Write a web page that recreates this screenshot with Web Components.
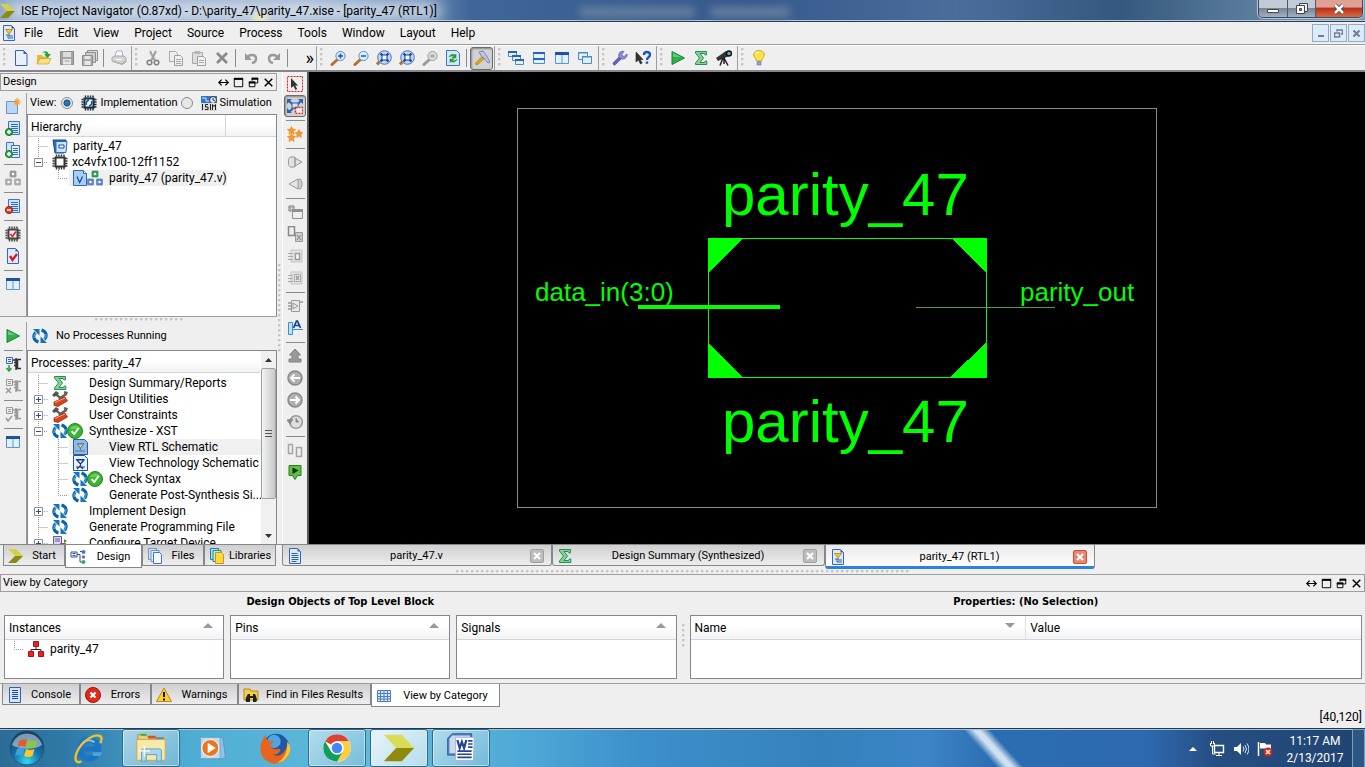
<!DOCTYPE html>
<html lang="en">
<head>
<meta charset="utf-8">
<title>ISE Project Navigator</title>
<style>
html,body{margin:0;height:100%}
body{font:12px/16px Roboto,"Liberation Sans",sans-serif;color:#000;background:#efefef;overflow:hidden;
--line:#9d9d9d;--frame:#828790;--small:11px;--face:#efefef}
</style>
</head>
<body>
<ise-window></ise-window>
<script>
const ARROWS='<path d="M6.500 14C1.500 12.500.500 8 3.500 4.500" fill="none" stroke="#0b62a8" stroke-width="3"/><path d="M1 1h6.500v6.500z" fill="#1474bd"/><path d="M9.500 2c5 1.500 6 6 3 9.500" fill="none" stroke="#0b62a8" stroke-width="3"/><path d="M15 15H8.500V8.500z" fill="#1474bd"/><path d="M2 10c0-2 .500-3.500 1.500-5M14 6c0 2-.500 3.500-1.500 5" stroke="#5cc0ea" fill="none"/>';
const DOC='<path d="M2.500.500h8l3 3v12h-11z" fill="#dcebfb" stroke="#3566b8"/><path d="M10.500.500v3h3z" fill="#2d5fb4"/>';
const MAG=(c,r,h,s)=>`<path d="M8 9 2 14.500" stroke="${h}" stroke-width="3" stroke-linecap="round"/><circle cx="10.500" cy="6" r="4.600" fill="${r}" stroke="${c}" stroke-width="1"/>${s}`;
const CHIP=(c,f)=>`<path d="M3.500 3.500h9v9h-9z" fill="${f}" stroke="${c}" stroke-width="2"/><path d="M4.500.500v2M7 .500v2M9.500.500v2M12 .500v2M4.500 13v2.500M7 13v2.500M9.500 13v2.500M12 13v2.500M.500 4.500h2M.500 7h2M.500 9.500h2M.500 12h2M13 4.500h2.500M13 7h2.500M13 9.500h2.500M13 12h2.500" stroke="${c}" stroke-width="1.400"/>`;
const LINES='<path d="M3.500 1.500h11v13h-11z" fill="#cfe3fa" stroke="#3b74c8"/><path d="M6 4.500h7M6 6.500h7M6 8.500h7M6 10.500h7M6 12.500h7" stroke="#2f6fc9"/>';
const SQ=(x,y,c)=>`<path d="M${x-.5} ${y-.5}h5v5h-5z" fill="${c}" fill-opacity=".35" stroke="${c}" stroke-width="1.500"/><path d="M${x-1.5} ${y+.8}h7M${x-1.5} ${y+3.2}h7M${x+.8} ${y-1.5}v7M${x+3.2} ${y-1.5}v7" stroke="${c}" stroke-width=".8"/><path d="M${x+1} ${y+1}h2v2h-2z" fill="#fff"/>`;
const TICK='<circle cx="8" cy="8" r="7.500" fill="#39b52e" stroke="#1c8718"/><path d="M3 6a5.500 5.500 0 0 1 10 0" fill="#8be07a" opacity=".6"/><path d="m4.500 8 2.700 3 4.500-6" fill="none" stroke="#fff" stroke-width="2"/>';
const SIGMA='<path d="M2.500 1.500h11v3.300h-1.700L11.300 3.500H7L10.500 8 7 12.500h4.500l.800-1.500h1.500v3.500H2.500V13L6.500 8 2.500 3z" fill="#8ccf9b" stroke="#1d9150"/>';
const CHEV='<path d="M0 1h8l7 7H7z" fill="#cfd24a"/><path d="M7 8h8l-7 7H0z" fill="#8a8a14"/>';
const WIN2='<path d="M1.500 2.500h13v11h-13z" fill="#e1f1fc" stroke="#5d96cf"/><path d="M1 2h14v3H1z" fill="#1d51a4"/><path d="M8 5v8" stroke="#5d96cf"/>';
const PROC=(c,x)=>`<path d="M1.500 1.500h6v6h-6z" fill="#eee" stroke="${c}"/><path d="M3 3.500h3M3 5.500h3" stroke="${c}"/><path d="M8 4h3M11 2v12M16 3.500h-3.500v9H16M9 6.500h3M9 9.500h3" stroke="${c==='#3a66b0'?'#333':c}" stroke-width="1.500" fill="none"/>${x}`;
const ICONS={
app:CHEV,
schem:DOC+'<path d="M4.500 4.500h7L8 9z" fill="#f5c431" stroke="#c8921a"/><path d="M5 10h2v3h5M8 9v2h4" fill="none" stroke="#2b62b8"/>',
rtl:'<path d="M1.500.500h11l3 3v12h-14z" fill="#8fb9e8" stroke="#2a5da8"/><path d="M5 4.500h7M5.500 5l3 4 3-4zM8.500 9v2.500M3 12h10" fill="#d8d6a0" stroke="#647a80"/>',
tech:'<path d="M1.500.500h11l3 3v12h-14z" fill="#eaf2fc" stroke="#1e50a8"/><path d="M4 4.500h8M5 5l3.500 4L12 5zM8.500 9v2M4 12h9M5 14l3-3 3 3" fill="none" stroke="#15398b" stroke-width="1.200"/>',
new:'<path d="M2.500.500h8l3.500 3.500v11.500H2.500z" fill="#e8f2fd" stroke="#2f62b0"/><path d="M10.500.500V4H14z" fill="#2b64c0"/>',
open:'<path d="M1 5h5l1 1.500h5.500V14H1z" fill="#e9b73a"/><path d="M1 14 4 8.500h11L12.500 14z" fill="#fbe08a" stroke="#c8921a" stroke-width=".6"/><path d="M6 3c3-3 6-1.500 6.500 1H15l-3.500 4L8 4h2C9.500 2.500 8 2 6 3z" fill="#23a23a"/>',
save:'<path d="M1.500 1.500h13v13h-13z" fill="#a3a3a3" stroke="#8c8c8c"/><path d="M4 2h8v5H4z" fill="#ddd"/><path d="M4 9h8v5.500H4z" fill="#e8e8e8"/><path d="M5.500 11h5" stroke="#999"/>',
saveall:'<path d="M5.500.500h10v10h-10z" fill="#ddd" stroke="#8c8c8c"/><path d="M3.500 2.500h10v10h-10z" fill="#ccc" stroke="#8c8c8c"/><path d="M.500 5.500h10v10H.500z" fill="#aaa" stroke="#8c8c8c"/><path d="M2.500 6h6v3h-6zM2.500 11h6v4h-6z" fill="#e6e6e6"/>',
print:'<path d="M4 6 5.500 1H11l1 5" fill="#fff" stroke="#9ab0d4"/><path d="M1 7.500 4 6h9l2 2v4l-4 2.500L1 11z" fill="#d4d4d4" stroke="#a8a8a8"/><path d="M2 11.500 11 14l3-3" fill="none" stroke="#aaa"/><path d="M5 9.500h6" stroke="#fff"/>',
cut:'<path d="M5 1l4.500 9M11 1 6.500 10" stroke="#a0a0a0" stroke-width="2"/><circle cx="4.500" cy="12.500" r="2.300" fill="none" stroke="#808080" stroke-width="1.500"/><circle cx="11.500" cy="12.500" r="2.300" fill="none" stroke="#808080" stroke-width="1.500"/>',
copy:'<path d="M1.500 1.500h6l2 2v8h-8z" fill="#eee" stroke="#aaa"/><path d="M6.500 5.500h6l2 2v8h-8z" fill="#eee" stroke="#a0a0a0"/><path d="M8 9.500h5M8 11.500h5M8 13.500h5" stroke="#aaa"/>',
paste:'<path d="M1.500 2.500h10v11h-10z" fill="#ddd" stroke="#aaa"/><path d="M4 1h5v3H4z" fill="#b5b5b5"/><path d="M6.500 6.500h6l2 2v7h-8z" fill="#f0f0f0" stroke="#a0a0a0"/><path d="M8 10.500h5M8 12.500h5" stroke="#aaa"/>',
del:'<path d="m3 3 10 10M13 3 3 13" stroke="#8a8a8a" stroke-width="2.800"/>',
undo:'<path d="M2 3v7h7z" fill="#999"/><path d="M4 8c2-4 9-4 9 .500 0 2.500-1.500 4-4 4.500" fill="none" stroke="#999" stroke-width="2.400"/>',
redo:'<path d="M14 3v7H7z" fill="#999"/><path d="M12 8C10 4 3 4 3 8.500c0 2.500 1.500 4 4 4.500" fill="none" stroke="#999" stroke-width="2.400"/>',
zin:MAG('#5b8fd0','#dcecff','#b9702c','<path d="M8 6h5M10.500 3.500v5" stroke="#1f56b0" stroke-width="1.500"/>'),
zout:MAG('#5b8fd0','#dcecff','#b9702c','<path d="M8 6h5" stroke="#1f56b0" stroke-width="1.500"/>'),
zfit:'<path d="M5 10 1 14.500" stroke="#b9702c" stroke-width="3"/><circle cx="8.500" cy="7.500" r="6.800" fill="#bcd6f7" stroke="#4a78bd"/><path d="m4.500 3.500 8 8M12.500 3.500l-8 8" stroke="#163f96" stroke-width="2"/><path d="M6 5h5v5H6z" fill="#fff" stroke="#163f96"/>',
zbox:MAG('#a0a0a0','#ddd','#999','<path d="M8.500 4.500h4v3h-4z" fill="#aaa"/>'),
refresh:'<path d="M1.500.500h10l3 3v12h-13z" fill="#d4e8fb" stroke="#3b78c4"/><path d="M4 7a4 4 0 0 1 6-2l1-1v4H7l1.500-1.500C7 5.800 5.500 6 4 7zM12 9a4 4 0 0 1-6 2.500l-1 1V9h4l-1.500 1.500C9 11 10.500 10.500 12 9z" fill="#2a9b35" stroke="#2a9b35" stroke-width=".6"/>',
hammer:'<path d="M1 13.500 9 6l2 2-8 7z" fill="#e8a51c" stroke="#a06a10" stroke-width=".6"/><path d="M5 2 9 1l3 4 4 7-2 1-4-5-2-1z" fill="#b9c7e8" stroke="#5868a0" stroke-width=".7"/>',
casc:'<path d="M.500 1.500h8v5h-8zM4.500 5.500h8v5h-8zM7.500 9.500h8v5h-8z" fill="#e1f1fc" stroke="#4c8bcc"/><path d="M0 1h9v2H0zM4 5h9v2H4zM7 9h9v2H7z" fill="#2a62b4"/>',
tileh:'<path d="M2.500 2.500h11v11h-11z" fill="#e1f1fc" stroke="#4c8bcc"/><path d="M2 2h12v2H2zM2 8h12v2H2z" fill="#2a62b4"/>',
tilev:WIN2,
dup:'<path d="M1.500 2.500h9v7h-9z" fill="#e1f1fc" stroke="#4c8bcc"/><path d="M5.500 6.500h9v7h-9z" fill="#e1f1fc" stroke="#4c8bcc"/><path d="M5 6h10v1.500H5zM1 2h10v1.500H1z" fill="#4c8bcc"/>',
wrench:'<path d="m2.500 13.500 6.500-6.500" stroke="#5f63b8" stroke-width="3.600" stroke-linecap="round"/><path d="M7.500 8C5.500 4 8 .500 12 1.500L9.800 4l.400 2 2 .400L15 4c.500 4-3.500 6.500-7.500 4z" fill="#8c90d8" stroke="#5559a8" stroke-width=".8"/>',
help:'<path d="M1 2v10l2.500-2L5.500 14l1.700-1-2-3.500H8z" fill="#333" stroke="#222" stroke-width=".6"/><path d="M9 5c0-4 6-4 6 0 0 2-3 2.500-3 5M12 11.500v2.200" fill="none" stroke="#1c56b8" stroke-width="2.400"/>',
play:'<path d="M2 1.500 14.500 8 2 14.500z" fill="#2fb04b" stroke="#168436"/><path d="m3 3 8 4H3z" fill="#8fdb93" opacity=".6"/>',
sigma:SIGMA,
scope:'<path d="m0 8 10-7 3 5-11 5z" fill="#333"/><circle cx="13" cy="3.500" r="2.500" fill="#49b7d8" stroke="#111" stroke-width="1.500"/><path d="m7 8-3 7.500M8 8l4 7.500M8 7v7" stroke="#222" stroke-width="1.500"/>',
bulb:'<path d="M8 .500c6 0 6.500 5.500 3.500 8L10.500 11h-5L4.500 8.500C1.500 6 2 .500 8 .500z" fill="#ffe24a" stroke="#d6a91c"/><path d="M5.500 3.500Q7 2 8 2.500" stroke="#fff" fill="none" stroke-width="1.500"/><path d="M6 11.500h4v3.500H6z" fill="#8aa5d8" stroke="#5a76b0" stroke-width=".6"/>',
newsrc:'<path d="M1.500 3.500h11v12h-11z" fill="#bcd6f5" stroke="#6a93cc"/><path d="M12 0v8M8 4h8M9.500 1.500l5 5M14.500 1.500l-5 5" stroke="#f3a32c" stroke-width="1.200"/>',
addsrc:LINES+'<circle cx="4" cy="12" r="3.600" fill="#35a84a" stroke="#1c7a2f"/><path d="M2 12h4M4 10v4" stroke="#fff" stroke-width="1.500"/>',
addcopy:'<path d="M1.500.500h7v10h-7z" fill="#cfe3fa" stroke="#3b74c8"/><path d="M6.500 3.500h8v12h-8z" fill="#e4effc" stroke="#3b74c8"/><path d="M8 6.500h5M8 8.500h5M8 10.500h5M8 12.500h5" stroke="#2f6fc9"/><circle cx="4" cy="12" r="3.600" fill="#35a84a" stroke="#1c7a2f"/><path d="M2 12h4M4 10v4" stroke="#fff" stroke-width="1.500"/>',
hier:SQ(6,2,'#999')+SQ(1.5,10,'#aaa')+SQ(10.5,10,'#aaa'),
rmsrc:LINES+'<circle cx="4" cy="12" r="3.600" fill="#e03a26" stroke="#a81c10"/><path d="M2 12h4" stroke="#fff" stroke-width="1.500"/>',
chipok:CHIP('#444','#eee')+'<path d="m5.500 8 2 2.500L11 5.500" fill="none" stroke="#e02020" stroke-width="1.600"/>',
docok:DOC+'<path d="m5 8 2.500 4L12 6" fill="none" stroke="#e01818" stroke-width="2.400"/>',
win2:WIN2,
run1:PROC('#3a66b0','<path d="M4 9v5M1.500 12 4 15l2.500-3" stroke="#28a03a" stroke-width="1.500" fill="none"/>'),
run2:PROC('#999','<path d="m1 10 5 5M6 10l-5 5" stroke="#999" stroke-width="1.500"/>'),
run3:PROC('#999','<path d="m1 12 2 3 4-5" stroke="#999" stroke-width="1.500" fill="none"/>'),
arrows:ARROWS,
chip:CHIP('#333','#fff'),
chipblue:CHIP('#1c2a3a','#fff')+'<path d="M8 5a3.500 3.500 0 0 0-2.500 5M8 11a3.500 3.500 0 0 0 2.500-5" fill="none" stroke="#0b62a8" stroke-width="1.800"/>',
isim:'<path d="M0 1h16v7H0z" fill="#2f78c8"/><path d="M1 3h4v3h4" stroke="#cfe6ff" fill="none"/><circle cx="12" cy="5" r="3.500" fill="#d6e6f6" stroke="#333"/><path d="M12 3v2l2 1" stroke="#333" fill="none"/><path d="M0 8h16v8H0z" fill="#dcdcdc"/><path d="M1.500 9v6M7 9.500H4.500v2.500H7v2.500H4M9.500 9v6M11.500 15V9.500l1.500 2 1.500-2V15" stroke="#222" fill="none"/>',
project:'<path d="M1 2h13l-2 13H3z" fill="#2a6dc0" stroke="#174a90"/><path d="M4 3.500h11l-1 11H4z" fill="#cfe4fa" stroke="#2a6dc0"/><path d="M7 7h5v3H7z" fill="#fff" stroke="#174a90"/>',
vfile:'<path d="M1.500.500h10l3 3v12h-13z" fill="#a9cdf5" stroke="#2c67b8"/><path d="M11.500.500v3h3" fill="#fff" stroke="#2c67b8"/><path d="m5 6.500 2.700 6 2.800-6" fill="none" stroke="#174a90" stroke-width="1.200"/>',
top:SQ(6,2,'#2f9a55')+SQ(1.5,10,'#5b80bb')+SQ(10.5,10,'#5b80bb'),
tools:'<path d="M0 4 4 0l3 2-1 2 6 3-2 2-6-4-2 1z" fill="#555"/><path d="m12 0 4 1-1 3-7 5-2-2 6-4z" fill="#6d625c"/><path d="M2 11 13 6l2.500 4L6 15.500l-4-1z" fill="#d9431c" stroke="#8f2408" stroke-width=".7"/><path d="m3 11.500 10-4.500" stroke="#f5a48a"/>',
tick:TICK,
config:'<path d="M1.500 1.500h8v12h-8z" fill="#dcd8f2" stroke="#5c5896"/><path d="M3 4h5M3 6h5" stroke="#5c5896"/><path d="M8 8h6v6H8z" fill="#c23a6a"/><path d="m12 4 3 2-3 2z" fill="#2a9b35"/>',
cursor:'<path d="M.500.500h15v15H.500z" fill="none" stroke="#f01818" stroke-dasharray="2 1"/><path d="M4 2v10l2.500-2L8.500 14l1.700-1-2-3.500H11z" fill="#333"/>',
pan:'<path d="m2 3 12 11M14 3 2 14" stroke="#2a62b4" stroke-width="2"/><path d="M0 1h5L0 6zM16 1h-5l5 5zM0 15h5L0 10z" fill="#2a62b4"/><path d="M5 5h6v5H5z" fill="#cfe3fa" stroke="#2a62b4"/><path d="M8.500 9.500h7v6h-7z" fill="#fff" stroke="#f01818" stroke-dasharray="2 1" stroke-width="1.500"/>',
stars:'<path d="m4.500.500 1.300 2.600 3 .400L6.500 5.500l.700 3-2.700-1.500L2 8.500l.500-3L.300 3.500l3-.400zM4.500 7.500l1.300 2.600 3 .400-2.300 2 .700 3-2.700-1.500L2 15.500l.500-3-2.200-2 3-.400zM12 3.500l1.300 2.600 2.700.400-2 2 .500 3L12 10l-2.500 1.500.500-3-2-2 2.700-.400z" fill="#f59a2c" stroke="#e07c18" stroke-width=".5"/>',
fwd:'<ellipse cx="4" cy="8" rx="2.500" ry="5" fill="#e6e6e6" stroke="#9a9a9a"/><path d="M4 3h4v10H4M8 4l7 4-7 4z" fill="#e0e0e0" stroke="#9a9a9a"/>',
back:'<ellipse cx="12.500" cy="8" rx="2.500" ry="5" fill="#ccc" stroke="#9a9a9a"/><path d="M11 3 2 8l9 5z" fill="#e6e6e6" stroke="#9a9a9a"/>',
g1:'<path d="M2 2h5v5H2zM1 3h7M1 6h7M3 1v7M6 1v7" stroke="#999" fill="#ddd"/><path d="M5.500 5.500h10v9h-10z" fill="#eee" stroke="#909090"/><path d="M5 5h11v3H5z" fill="#909090"/>',
g2:'<path d="M1.500.500h6v9h-6z" fill="#eee" stroke="#888" stroke-width="1.500"/><path d="M8.500 6.500h7v9h-7z" fill="#ccc" stroke="#999"/><path d="m10 9 4 5M14 9l-4 5" stroke="#888"/>',
g3:'<path d="M4 2h11v12H4z" fill="#e2e2e2" stroke="#c5c5c5"/><path d="M8.500 5.500h4v6h-4z" fill="#fff" stroke="#999" stroke-width="1.500"/><path d="M1 5.500h5M1 8.500h5M1 11.500h5" stroke="#aaa"/>',
g4:'<path d="M4 2h11v12H4z" fill="#e2e2e2" stroke="#c5c5c5"/><path d="M7.500 4.500h6v7h-6z" fill="#eee" stroke="#aaa"/><path d="m9 6 3 4M12 6l-3 4" stroke="#999" stroke-width="1.300"/><path d="M1 5.500h5M1 8.500h5M1 11.500h5" stroke="#aaa"/>',
g5:'<path d="M4.500 2.500h8v11h-8zM6 5l5 3-5 3z" fill="#e8e8e8" stroke="#999"/><path d="M1 5h3M1 8h3M1 11h3M12 4h4" stroke="#999" stroke-width="1.500"/>',
atext:'<path d="M1.500 2.500h4v12h-4z" fill="#bfe0fa" stroke="#3b8fd8"/><path d="M5 9.500h11" stroke="#3b8fd8"/><path d="M6.500 8 9.500 1h1l3 7M7.500 5.500h5" fill="none" stroke="#1a3f94" stroke-width="1.700"/>',
upg:'<path d="m8 1 5.500 6H11v4h3v3H2v-3h3V7H2.500z" fill="#999" stroke="#808080"/>',
left:'<circle cx="8" cy="8" r="7" fill="#b0b0b0" stroke="#8a8a8a" stroke-width="1.500"/><path d="M13 8H4M7.500 4.500 4 8l3.500 3.500" stroke="#fff" stroke-width="2" fill="none"/>',
right:'<circle cx="8" cy="8" r="7" fill="#b0b0b0" stroke="#8a8a8a" stroke-width="1.500"/><path d="M3 8h9M8.500 4.500 12 8l-3.500 3.500" stroke="#fff" stroke-width="2" fill="none"/>',
clock:'<circle cx="9" cy="8" r="6.300" fill="#e0e0e0" stroke="#9a9a9a" stroke-width="1.500"/><path d="M9 4v4h3M0 6l6-1-3 5z" stroke="#8a8a8a" fill="#8a8a8a"/>',
gcopy:'<path d="M1.500 2.500h4v9h-4zM9.500 5.500h5v9h-5z" fill="#eee" stroke="#a5a5a5" stroke-width="1.500"/>',
marker:'<path d="M2 1.500h12v10h-3.500L8 15.500 5.500 11.500H2z" fill="#5cc43a" stroke="#2c7a1a"/><path d="m5.500 3.500 6 3-6 3.500z" fill="#222"/>',
dhier:'<path d="M1 3h6v5H1z" fill="#fff" stroke="#2c4f94"/><path d="M2.500 4.500h3M2.500 6.500h3M7 5.500h3V13h3M10 2.500h3" stroke="#2c4f94" fill="none"/><circle cx="13.500" cy="3" r="2" fill="#4b78c8"/><circle cx="13.500" cy="8" r="1.800" fill="#8a64b0"/><circle cx="13.500" cy="13" r="2" fill="#44a860"/>',
files:'<path d="M1.500.500h8v11h-8z" fill="#d4e2f5" stroke="#6f93cc"/><path d="M4 2.500h8v11H4z" fill="#e3edf9" stroke="#6f93cc"/><path d="M6.500 4.500h6l2 2v9h-8z" fill="#f2f7fd" stroke="#4a74b8"/>',
libs:'<path d="M1.500.500h8v11h-8z" fill="#aee0f7" stroke="#1f78c0"/><path d="M4 2.500h8v11H4z" fill="#b8ecdc" stroke="#2f8a6a"/><path d="M6.500 4.500h6l2 2v9h-8z" fill="#ffd83c" stroke="#c8961a"/>',
doc:DOC+'<path d="M4.500 5.500h6M4.500 7.500h7M4.500 9.500h7M4.500 11.500h7M4.500 13.500h5" stroke="#2d5fb4"/>',
red:'<path d="M5.500.500h5v5h-5zM.500 10.500h5v5h-5zM10.500 10.500h5v5h-5z" fill="#e62424" stroke="#b01010"/><path d="M8 6v2.500M3 10V8.500h10V10" fill="none" stroke="#222"/>',
console:'<path d="M2.500.500h11v15h-11z" fill="#d3e5fa" stroke="#2f5fb0"/><path d="M5 3.500h6M5 5.500h6M5 7.500h6M5 9.500h6M5 11.500h6" stroke="#1e4ea8"/>',
error:'<circle cx="8" cy="8" r="7.500" fill="#e02a1a" stroke="#a01408"/><path d="m5.500 5.500 5 5M10.500 5.500l-5 5" stroke="#fff" stroke-width="2.200"/>',
warn:'<path d="M8 1 15.500 14.500H.500z" fill="#ffd02c" stroke="#c08a10" stroke-linejoin="round"/><path d="M8 5v5M8 11.500v2" stroke="#111" stroke-width="2"/>',
find:'<path d="M1 2h6l1 2h7v9H1z" fill="#f3cc4a" stroke="#b88a1a"/><path d="M4 15c-2 0-2-4 1-8h2v8zM12 15c3 0 2-4 0-8h-2v8zM7 9h3v2H7z" fill="#222"/>',
grid:'<path d="M1.500 2.500h13v11h-13z" fill="#dceafc" stroke="#4b7cc8"/><path d="M1 5.500h14M1 8.500h14M1 11h14M4.500 2v12M8 2v12M11.500 2v12" stroke="#4b7cc8"/>',
harrow:'<path d="M3 8h10M6 5 3 8l3 3M10 5l3 3-3 3" stroke="#000" fill="none" stroke-width="1.300"/>',
max:'<path d="M3.500 4.500h9v8h-9z" fill="none" stroke="#000"/><path d="M3 4h10" stroke="#000" stroke-width="2"/>',
float:'<path d="M6.500 6V3.500h6v5H10M3.500 7.500h6v5h-6z" fill="none" stroke="#000"/><path d="M6 4h7M3 8h7" stroke="#000" stroke-width="2"/>',
close:'<path d="m4 4 8 8M12 4l-8 8" stroke="#000" stroke-width="1.600"/>',
net:'<path d="M5.500 4.500h9v7h-9z" fill="none" stroke="#fff" stroke-width="1.400"/><path d="M7 14.500h6M10 12v2M1.500 2v3h4V2M3.500 5v8h3M2.500 0v3M4.500 0v3" stroke="#fff" fill="none"/>',
sound:'<path d="M1 6h3l4-4v12l-4-4H1z" fill="#fff"/><path d="M10 5.500q2 2.500 0 5M12 4q3 4 0 8M14 2.500q4 5.500 0 11" stroke="#dfe9f5" fill="none"/>',
flag:'<path d="M1.500 1v14" stroke="#fff" stroke-width="1.500"/><path d="M3 2h5l1 1.500h5V9H9L8 7.500H3z" fill="#fff"/><circle cx="11" cy="11" r="4.500" fill="#d8231c"/><path d="m9 9 4 4M13 9l-4 4" stroke="#fff" stroke-width="1.500"/>'
};
const BIG={
start:'<defs><radialGradient id="o" cx=".5" cy=".9" r=".9"><stop offset="0" stop-color="#2fd8f5"/><stop offset=".45" stop-color="#1574a8"/><stop offset="1" stop-color="#12395c"/></radialGradient></defs><circle cx="18" cy="18" r="17" fill="url(#o)" stroke="#2c5272"/><path d="M3 15a15.500 15.500 0 0 1 30 0c-8 5-22 5-30 0z" fill="#fff" opacity=".45"/><path d="M10 11q4-3 8-1l-2 7q-4-2-7.500 0z" fill="#e9582a"/><path d="M19 10q4 2 9 0l-2 7q-4 2-9 0z" fill="#8cc63c"/><path d="M8 19q4-2 7.500 0l-2 7q-4-2-7.500 0z" fill="#3fa0e0"/><path d="M17 19q4 2 8.500 0l-2 7q-4 2-8.500 0z" fill="#fbc62c"/>',
ie:'<circle cx="19" cy="19" r="10" fill="none" stroke="#1c74c8" stroke-width="6.500"/><path d="M12 19h16" stroke="#1c74c8" stroke-width="5"/><path d="M23 22.500h10l-2 4h-8z" fill="#4ba9da"/><path d="M12 13q6-6 13-1" fill="none" stroke="#7cc8f0" stroke-width="2"/><path d="M31 6C27 2 12 9 6 23c-3 8 0 12 5 9M29 5c4 0 4 4 2 8" fill="none" stroke="#f2c02c" stroke-width="2.500"/>',
folder:'<path d="M4 4h9l2 3h17v24H4z" fill="#e9cf7a" stroke="#b8963c"/><path d="M7 3h6v2H7z" fill="#3aa83a"/><path d="M15 5h8v3h-8z" fill="#d8532c"/><path d="M23 7h8v3h-8z" fill="#3a8cd8"/><path d="M3 9h30v22H3z" fill="#f8e9a8" stroke="#c8a850"/><path d="M8 32V21q0-2 2-2h17q2 0 2 2v11h-5v-7H13v7z" fill="#a8d8f0" stroke="#5a9cc4"/><path d="M11 15v12M5 21h12" stroke="#fff" stroke-width="1.500"/>',
wmp:'<path d="M12 6h17l3 22-3 2H12z" fill="#8fc3e4" stroke="#5a94bc"/><path d="M4 6h22v24H4z" fill="#bcdcef" stroke="#6aa4c8"/><circle cx="15" cy="18" r="9.500" fill="#ee7420" stroke="#fff"/><path d="m12 12 9 6-9 6z" fill="#fff"/>',
ff:'<circle cx="19" cy="17" r="14" fill="#1f58a8"/><circle cx="17" cy="11" r="7" fill="#52a4e0"/><path d="M3 15C4 9 7 6 8 4q0 4 3 7 3-1 6 1-3 1-4 4 2 4 7 3 3-1 4 1-2 5-8 5c6 4 15-2 15-13q5 7 1 14c-5 10-18 11-25 4-4-4-5-9-4-15z" fill="#e8641c"/><path d="M31 11q6 8 1 15-4 7-12 8 12-7 11-23z" fill="#fbc42c"/>',
chrome:'<circle cx="18" cy="18" r="14.500" fill="#fff"/><path d="M18 18 5.400 10.800A14.500 14.500 0 0 1 30.600 10.800H18z" fill="#db4437"/><path d="M30.600 10.800A14.500 14.500 0 0 1 18 32.500L24.200 21.600 18 10.800z" fill="#ffcd40"/><path d="M5.400 10.800A14.500 14.500 0 0 0 18 32.500L24.200 21.600 11.800 21.600z" fill="#0f9d58"/><circle cx="18" cy="18" r="7.200" fill="#fff"/><circle cx="18" cy="18" r="5.500" fill="#4285f4"/>',
xil:'<path d="M2 4h19l13 14H15z" fill="#dbdc55"/><path d="M15 18h19L21 32H2z" fill="#8d8a0c"/>',
word:'<path d="M8 2h22v24H3V7z" fill="#5b82c4" stroke="#2c4f94"/><path d="M8 4h20v20H5V8z" fill="#c9daf2"/><path d="M12 6h21l-1 26H12z" fill="#fff" stroke="#9ab0d0"/><path d="m14 9 2.500 9 2.500-7 2.500 7L24 9" fill="none" stroke="#23449a" stroke-width="2.500"/><path d="M26 10h5M26 13.500h5M26 17h5M14 21.500h16M14 25h16M14 28.500h16" stroke="#23449a" stroke-width="1.800"/>'
};
const define=(name,html)=>{
  const t=document.createElement('template');t.innerHTML=html;
  customElements.define(name,class extends HTMLElement{
    constructor(){super();this.attachShadow({mode:'open'}).append(t.content.cloneNode(true));}
  });
};
const attr=(name,render)=>customElements.define(name,class extends HTMLElement{
  connectedCallback(){if(!this.shadowRoot)this.attachShadow({mode:'open'});this.shadowRoot.innerHTML=render(this);}
});
const RESET=':host,*{box-sizing:border-box}button{font:inherit;color:inherit;background:none;border:0;padding:0;margin:0}';
const i=(n,s=16)=>`<ui-icon name="${n}" size="${s}"></ui-icon>`;

attr('ui-icon',e=>{const n=e.getAttribute('name'),s=+e.getAttribute('size')||16;
  return `<style>:host{display:block;width:${s}px;height:${s}px;flex:none}svg{display:block}</style><svg aria-hidden="true" width="${s}" height="${s}" viewBox="0 0 ${BIG[n]?'36 36':'16 16'}">${BIG[n]||ICONS[n]}</svg>`;});

attr('drag-grip',e=>{const v=e.hasAttribute('vertical');
  return `<style>:host{display:flex;align-items:center;justify-content:center}div{${v?'width:3px;height:var(--grip,100%)':'height:3px;width:var(--grip,100%)'};background:radial-gradient(circle at 1px 1px,#c6c6c6 1px,transparent 2px) 0 0/${v?'3px 5px':'5px 3px'}}</style><div></div>`;});

/* title bar */
define('title-bar',`<style>${RESET}
:host{display:flex;height:22px;flex:none;position:relative;overflow:hidden;border-bottom:1px solid #2e3c50;box-shadow:inset 0 -1px #b9c7da;
background:linear-gradient(90deg,#8fa9c8 0,#9db3cf 300px,#6f90b8 420px,#3f6698 470px,#36598c 55%,#4a6d9c 70%,#35587f 82%,#5c7d9e 92%,#7f9ab5)}
.glow{position:absolute;left:10px;top:4px;width:430px;height:14px;background:#e6edf6;filter:blur(7px);opacity:.85}
.ghost{position:absolute;left:580px;top:7px;width:210px;height:10px;filter:blur(4px);background:linear-gradient(90deg,#67809f 0 115px,transparent 115px 130px,#67809f 130px)}
.warm{position:absolute;left:252px;top:15px;width:16px;height:6px;background:#fff2b8;filter:blur(3px)}
ui-icon{position:relative;margin:3px 5px 0 0}h1{position:relative;flex:1;margin:3px 0 0;font:inherit;white-space:nowrap}
.ctl{display:flex;height:18px;margin-right:2px;border:1px solid #3d4a5c;border-top:0;border-radius:0 0 5px 5px;overflow:hidden;position:relative;box-shadow:0 0 1px 1px #b8c8da}
.ctl button{width:28px;display:grid;place-items:center;background:linear-gradient(#c2cbd6 45%,#76869b 50%,#a3b0c0)}
.ctl button+button{border-left:1px solid #4c5a6c}.ctl .x{width:47px;background:linear-gradient(#dfa193 40%,#b8321a 50%,#d86a45)}
</style><div class="glow"></div><div class="ghost"></div><div class="warm"></div>${i('app',16)}<h1>ISE Project Navigator (O.87xd) - D:\\parity_47\\parity_47.xise - [parity_47 (RTL1)]</h1>
<div class="ctl"><button aria-label="Minimize"><svg width="14" height="14"><path d="M1.500 7.500h11v3h-11z" fill="#fff" stroke="#444"/></svg></button><button aria-label="Restore"><svg width="14" height="14"><path d="M4.500 1.500h8v8h-8z" fill="#eee" stroke="#444"/><path d="M1.500 3.500h8v8h-8z" fill="#fff" stroke="#444"/><path d="M4.500 6.500h2v2h-2z" fill="#99a" stroke="#444"/></svg></button><button class="x" aria-label="Close"><svg width="14" height="12"><path d="m3 2 8 8M11 2l-8 8" stroke="#444" stroke-width="4"/><path d="m3 2 8 8M11 2l-8 8" stroke="#fff" stroke-width="2.500"/></svg></button></div>`);

/* menu bar */
define('menu-bar',`<style>${RESET}
:host{display:flex;height:23px;flex:none;align-items:center;border-bottom:1px solid var(--line);padding-left:1px;background:var(--face)}
nav{display:flex;flex:1;gap:15px;padding-left:7px}
.mdi{display:flex;gap:1px}.mdi button{width:17px;height:18px;border:1px solid #93a9c4;background:#dcebfa;display:grid;place-items:center}
</style>${i('schem')}<nav>${['File','Edit','View','Project','Source','Process','Tools','Window','Layout','Help'].map(m=>`<button>${m}</button>`).join('')}</nav>
<div class="mdi"><button aria-label="Minimize document"><svg width="9" height="9"><path d="M2 7h6" stroke="#6f7f96" stroke-width="2"/></svg></button><button aria-label="Restore document"><svg width="9" height="9"><path d="M3 2.500V1h5.500v4H7M.500 4h5v4h-5z" fill="none" stroke="#6f7f96" stroke-width="1.500"/></svg></button><button aria-label="Close document"><svg width="9" height="9"><path d="m1.500 1.500 6 6M7.500 1.500l-6 6" stroke="#6f7f96" stroke-width="2"/></svg></button></div>`);

/* tool bar */
const tb=l=>`<div class="g"><drag-grip vertical></drag-grip>${l.split(' ').map(n=>n==='|'?'<hr>':n==='»'?'<button class="more" aria-label="More tools">»</button>':`<button class="${n==='hammer'?'on':''}" aria-label="${n}">${i(n)}</button>`).join('')}</div>`;
define('tool-bar',`<style>${RESET}
:host{display:flex;height:27px;flex:none;border-bottom:2px solid #85858b;background:var(--face);border-top:1px solid #fff}
.g{display:flex;align-items:center;border-right:1px solid var(--line);padding-right:2px}.g:nth-of-type(1),.g:nth-of-type(3){padding-right:1px}.g:last-child{border:0}
drag-grip{width:9px;--grip:20px;align-self:stretch}
button{width:23px;height:23px;display:grid;place-items:center}
hr{width:6px;height:18px;margin:0;border:0;background:linear-gradient(#8a8a8a,#8a8a8a) 2px 0/1px 100% no-repeat}
.more{width:23px;font-size:18px;justify-items:end}.on{border:1px solid #6c6c6c;border-radius:3px;background:#d2d2d2;box-shadow:inset 1px 1px 2px #888}
</style>${tb('new open save saveall | print')}${tb('cut copy paste del | undo redo | »')}${tb('zin zout zfit zfit zbox refresh | hammer')}${tb('casc tileh tilev dup')}${tb('wrench help')}${tb('play sigma scope')}${tb('bulb')}`);

/* panel header, with its caption slotted in */
define('panel-header',`<style>${RESET}
:host{display:flex;align-items:center;height:18px;flex:none;border:1px solid var(--line);padding:0 0 0 2px;font-size:var(--small)}
span{flex:1}button{width:15px}</style><span><slot></slot></span>${[['harrow','Resize'],['max','Maximize'],['float','Float'],['close','Close']].map(([n,l])=>`<button aria-label="${l} panel">${i(n,15)}</button>`).join('')}`);

/* vertical strip of tools */
attr('side-tools',e=>`<style>${RESET}
:host{display:flex;flex-direction:column;align-items:center}
button{width:22px;height:22px;display:grid;place-items:center;flex:none}hr{width:19px;height:6px;margin:0;border:0;flex:none;background:linear-gradient(#8a8a8a,#8a8a8a) 0 3px/100% 1px no-repeat}
.on{border:1px solid #6c6c6c;border-radius:3px;background:#d2d2d2;box-shadow:inset 1px 1px 2px #888}
</style>${e.getAttribute('tools').split(' ').map(n=>n==='|'?'<hr>':`<button class="${n==='pan'?'on':''}" aria-label="${n}">${i(n)}</button>`).join('')}`);

/* one row of a tree; guides: v line, t tee, l elbow, + and - boxes, _ blank */
attr('tree-row',e=>{
  const g=[...(e.getAttribute('guides')||'')].map(c=>{
    const box=c==='+'||c==='-';
    const up={t:'M9.500 0v16M9.500 8.500H19',l:'M9.500 0v8.500H19',v:'M9.500 0v16','+':'M9.500 0v16M9.500 8.500H19','-':'M9.500 0v8.500H19',_:''}[c];
    return `<svg width="20" height="16"><path d="${up}" fill="none" stroke="#9a9a9a" stroke-dasharray="1 1"/>${box?`<path d="M5.500 4.500h8v8h-8z" fill="#fff" stroke="#919191"/><path d="M7 8.500h5${c==='+'?'M9.500 6v5':''}" stroke="#234ca0"/>`:''}</svg>`}).join('');
  const ic=(e.getAttribute('icons')||'').split(' ').filter(Boolean);
  return `<style>:host{display:flex;height:16px;white-space:nowrap}svg{display:block;flex:none}.b{display:flex;flex:var(--fill,none);padding-left:3px}.sel{background:#f0f0f0}.i{display:flex;width:${e.getAttribute('slotw')||37}px;flex:none}.i ui-icon+ui-icon{margin-left:-1px}</style>${g}<div class="b ${e.hasAttribute('selected')?'sel':''}"><span class="i">${ic.map(n=>i(n)).join('')}</span><span><slot></slot></span></div>`;});

/* design panel */
define('design-panel',`<style>${RESET}
:host{display:flex;flex-direction:column;flex:none;width:277px;min-height:0;padding-top:1px}
.up{display:flex;flex:none;height:226px;border-bottom:1px solid var(--line)}
side-tools{width:27px;border-right:1px solid var(--line);flex:none}
.up side-tools{padding-top:2px;margin-top:2px}.main{flex:1;min-width:0;display:flex;flex-direction:column}
.view{display:flex;align-items:center;height:23px;font-size:var(--small);padding-left:3px}
.view label{display:flex;align-items:center;gap:3px}.view input{appearance:none;flex:none;width:12px;height:12px;margin:0 5px;border:1px solid #8a8a8a;border-radius:50%;background:#e8e8e8}
.view label+label input{margin-left:3px}
.view input:checked{background:radial-gradient(circle,#2a78b8 0 2px,#155080 3px,#e8f0f5 4px)}
.box{flex:1;min-height:0;background:#fff;border:1px solid var(--frame);border-bottom:0;overflow:hidden}
.hd{height:22px;padding:4px 3px 0;border-bottom:1px solid #d5d5d5;background:linear-gradient(#fff 40%,#f2f3f5)}
.hier .hd{background:linear-gradient(#d5d5d5,#d5d5d5) 197px 0/1px 100% no-repeat,linear-gradient(#fff 40%,#f2f3f5)}
.tree{padding:1px 0 0 1px}.pr .tree{padding-top:2px}
drag-grip.h{height:4px;--grip:88px}
.dn{display:flex;flex:1;min-height:0}.dn side-tools{padding-top:3px;margin-top:1px}
.st{display:flex;align-items:center;height:29px;gap:8px;padding-left:5px;font-size:var(--small);flex:none}
.pr{display:flex}.list{flex:1;min-width:0;overflow:hidden;--fill:1}.list .hd{margin-right:1px}
.sb{width:15px;flex:none;display:flex;flex-direction:column;background:#f0f0f0}
.sb button{height:17px;display:grid;place-items:center}.thumb{height:131px;border:1px solid #a0a0a0;border-radius:2px;background:linear-gradient(90deg,#f3f3f3,#c6c8ca);display:grid;place-items:center}.sb i{flex:1}
</style><panel-header>Design</panel-header>
<div class="up"><side-tools tools="newsrc addsrc addcopy | hier | rmsrc | chipok docok | win2"></side-tools><div class="main">
<div class="view"><span>View:</span><label><input type="radio" name="view" checked>${i('chipblue')}Implementation</label><label><input type="radio" name="view">${i('isim')}Simulation</label></div>
<div class="box hier"><div class="hd">Hierarchy</div><div class="tree"><tree-row guides="t" icons="project" slotw="21">parity_47</tree-row><tree-row guides="-" icons="chip" slotw="20">xc4vfx100-12ff1152</tree-row><tree-row guides="_l" icons="vfile top" selected>parity_47 (parity_47.v)</tree-row></div></div></div></div>
<drag-grip class="h"></drag-grip>
<div class="dn"><side-tools tools="play | run1 run2 | run3 | win2"></side-tools><div class="main"><div class="st">${i('arrows')}No Processes Running</div>
<div class="box pr"><div class="list"><div class="hd">Processes: parity_47</div><div class="tree">
<tree-row guides="t" icons="sigma">Design Summary/Reports</tree-row><tree-row guides="+" icons="tools">Design Utilities</tree-row><tree-row guides="+" icons="tools">User Constraints</tree-row><tree-row guides="-" icons="arrows tick">Synthesize - XST</tree-row><tree-row guides="vt" icons="rtl" selected>View RTL Schematic</tree-row><tree-row guides="vt" icons="tech">View Technology Schematic</tree-row><tree-row guides="vt" icons="arrows tick">Check Syntax</tree-row><tree-row guides="vl" icons="arrows">Generate Post-Synthesis Si...</tree-row><tree-row guides="+" icons="arrows">Implement Design</tree-row><tree-row guides="t" icons="arrows">Generate Programming File</tree-row><tree-row guides="+" icons="config">Configure Target Device</tree-row></div></div>
<div class="sb"><button aria-label="Scroll up"><svg width="7" height="4"><path d="M0 4 3.500 0 7 4z" fill="#333"/></svg></button><div class="thumb"><svg width="7" height="9"><path d="M0 1.500h7M0 4.500h7M0 7.500h7" stroke="#555"/></svg></div><i></i><button aria-label="Scroll down"><svg width="7" height="4"><path d="M0 0 3.500 4 7 0z" fill="#333"/></svg></button></div></div></div></div>`);

/* schematic canvas */
define('rtl-canvas',`<style>:host{display:block;box-sizing:border-box;flex:1;min-width:0;background:#000;border-left:2px solid #55585e;overflow:hidden}svg{display:block;width:100%;height:100%}text{font-family:"Liberation Sans",Arial,sans-serif;fill:#0f0}</style>
<svg viewBox="0 0 1056 472" preserveAspectRatio="xMinYMin meet" role="img" aria-label="RTL schematic">
<g fill="none" shape-rendering="crispEdges"><path d="M208.500 36.500h639v399h-639z" stroke="#8a8a8a"/><path d="M399.500 166.500h278v139h-278z" stroke="#0f0"/>
<path d="M399 166h36l-36 35zM678 166h-36l36 35zM399 306h36l-36-35zM678 306h-38l38-36z" fill="#0f0"/>
<path d="M329 235h142" stroke="#0f0" stroke-width="4"/><path d="M607 235.500h139" stroke="#5a925a"/></g>
<text x="413" y="143" font-size="60">parity_47</text><text x="413" y="370" font-size="60">parity_47</text><text x="226" y="229" font-size="26">data_in(3:0)</text><text x="711" y="229" font-size="26">parity_out</text></svg>`);

/* tabs: dock style and document style */
attr('ui-tab',e=>{const doc=e.hasAttribute('doc'),on=e.hasAttribute('active');
return `<style>${RESET}:host{display:block;flex:none}
button{display:flex;align-items:center;width:100%;height:${on?(doc?24:23):21}px;padding:2px 0 0 4px;font-size:var(--small);text-align:left;border:1px solid var(--frame);border-top:0;${doc?'border-radius:0 0 3px 3px;':''}background:${on?(doc?'linear-gradient(#e9e9e9,#fff)':'#fff'):'linear-gradient(#cfcfcf,#ededed)'};${on&&doc?'border-bottom:3px solid #2c82e0;':''}}
.t{flex:1;text-align:center;white-space:nowrap}.c{width:14px;height:14px;border:1px solid ${on?'#d84a32':'#a0a0a0'};background:${on?'#e58a70':'#bdbdbd'};border-radius:2px;margin-right:7px}svg{display:block}</style>
<button role="tab" aria-selected="${on}">${i(e.getAttribute('icon'))}<span class="t"><slot></slot></span>${doc?'<span class="c"><svg width="12" height="12"><path d="m3 3 6 6M9 3 3 9" stroke="#fff" stroke-width="2"/></svg></span>':''}</button>`;});

define('workspace-area',`<style>${RESET}
:host{display:flex;flex-direction:column;flex:1;min-height:0}
.row{display:flex;flex:1;min-height:0}
.row>drag-grip{width:5px;--grip:88px}
side-tools{width:25px;flex:none;padding-top:1px;border-left:1px solid #fff}
.tabs{display:flex;height:24px;flex:none;border-top:1px solid var(--frame);padding-left:3px}
.dock{display:flex;width:274px}.docs{display:flex;margin-left:5px}
</style><div class="row"><design-panel></design-panel><drag-grip vertical></drag-grip><side-tools tools="cursor pan | stars | fwd back | g1 g2 g3 g4 | g5 atext | upg left right clock | gcopy marker"></side-tools><rtl-canvas></rtl-canvas></div>
<div class="tabs"><div class="dock"><ui-tab icon="app" style="width:62px">Start</ui-tab><ui-tab icon="dhier" active style="width:77px">Design</ui-tab><ui-tab icon="files" style="width:62px">Files</ui-tab><ui-tab icon="libs" style="width:72px">Libraries</ui-tab></div>
<div class="docs"><ui-tab doc icon="doc" style="width:270px">parity_47.v</ui-tab><ui-tab doc icon="sigma" style="width:273px">Design Summary (Synthesized)</ui-tab><ui-tab doc active icon="schem" style="width:270px">parity_47 (RTL1)</ui-tab></div></div>`);

/* category panel */
define('category-panel',`<style>${RESET}
:host{display:flex;flex-direction:column;flex:none}
.body{display:flex;padding:0 3px 4px 4px}.half{flex:1;min-width:0}.body>drag-grip{width:13px;--grip:24px}
h2{margin:0;height:23px;padding-top:2px;text-align:center;font:bold 11px/16px "DejaVu Sans Condensed",sans-serif}
.bx{display:flex;gap:6px}.b{flex:1;height:64px;background:#fff;border:1px solid var(--frame)}
table{width:100%;border-collapse:collapse;table-layout:fixed}th{font-weight:400;text-align:left;padding:2px 10px 0 4px;height:23px;border-bottom:1px solid #d5d5d5;background:linear-gradient(#fff 40%,#f2f3f5)}
th+th{border-left:1px solid #e0e0e0}td{padding:1px 0 0}th svg{float:right;margin-top:3px}
.tabs{display:flex;height:24px;border-top:1px solid var(--line);padding-left:2px}
p{margin:0;height:21px;padding:2px 3px 0;text-align:right}
</style><panel-header>View by Category</panel-header><div class="body"><section class="half"><h2>Design Objects of Top Level Block</h2><div class="bx">${['Instances','Pins','Signals'].map((t,n)=>`<div class="b"><table><thead><tr><th scope="col">${t}<svg width="10" height="5" aria-hidden="true"><path d="M0 5 5 0l5 5z" fill="#999"/></svg></th></tr></thead>${n?'':'<tbody><tr><td><tree-row guides="l" icons="red" slotw="22">parity_47</tree-row></td></tr></tbody>'}</table></div>`).join('')}</div></section>
<drag-grip vertical></drag-grip><section class="half"><h2>Properties: (No Selection)</h2><div class="b"><table><thead><tr><th scope="col">Name<svg width="10" height="5" aria-hidden="true"><path d="M0 0l5 5 5-5z" fill="#999"/></svg></th><th scope="col">Value</th></tr></thead></table></div></section></div>
<div class="tabs"><ui-tab icon="console" style="width:78px">Console</ui-tab><ui-tab icon="error" style="width:71px">Errors</ui-tab><ui-tab icon="warn" style="width:87px">Warnings</ui-tab><ui-tab icon="find" style="width:133px">Find in Files Results</ui-tab><ui-tab active icon="grid" style="width:129px">View by Category</ui-tab></div><p>[40,120]</p>`);

/* task bar */
define('task-bar',`<style>${RESET}
:host{display:flex;height:39px;flex:none;border-top:1px solid #26394c;box-shadow:inset 0 1px #9fc4dc;color:#fff;align-items:stretch;
background:linear-gradient(48deg,transparent calc(72% - 8px),#cfe0f0 72%,#cfe0f0 calc(72% + 4px),transparent calc(72% + 12px)),linear-gradient(90deg,#2c6d97 0,#2f7aa8 5%,#4fadd4 14%,#61bcdc 28%,#4fa9d6 38%,#3c90cb 47%,#3680bd 60%,#3c84c6 68%,#2b6db2 73%,#2d69b0 84%,#264e82 89%,#1f4470)}
nav{display:flex;flex:1;gap:4px}button{width:58px;display:grid;place-items:center}
.o{border:1px solid #2f6b8c;border-radius:3px;background:linear-gradient(135deg,#c9e6f2cc,#80bfdaaa);box-shadow:inset 0 0 0 1px #e2f3fa99}.a{background:linear-gradient(135deg,#e9f5fa,#b6dcec)}
.s{width:54px}.w{width:60px}.tray{display:flex;align-items:center;gap:8px;padding-top:2px}.up{margin-right:4px}time{width:74px;text-align:center;line-height:17px;padding-top:4px;margin-left:5px}.end{width:13px;border:1px solid #7f9cba;border-bottom:0;background:#2c5684}
</style><nav><button class="s" aria-label="Start menu">${i('start',36)}</button><button class="w" aria-label="Internet Explorer">${i('ie',34)}</button><button class="o" aria-label="Explorer">${i('folder',34)}</button><button aria-label="Media Player">${i('wmp',32)}</button><button aria-label="Firefox">${i('ff',34)}</button><button class="o" aria-label="Chrome">${i('chrome',34)}</button><button class="o a" aria-label="ISE">${i('xil',34)}</button><button class="o" aria-label="Word">${i('word',32)}</button></nav>
<div class="tray"><svg class="up" width="8" height="4" aria-hidden="true"><path d="M0 4 4 0l4 4z" fill="#fff"/></svg>${i('net')}${i('sound')}${i('flag')}</div><time>11:17 AM<br>2/13/2017</time><div class="end"></div>`);

define('ise-window',`<style>:host{display:flex;flex-direction:column;height:100vh;min-height:600px}drag-grip{height:6px;--grip:454px;flex:none}</style>
<title-bar></title-bar><menu-bar></menu-bar><tool-bar></tool-bar><workspace-area></workspace-area><drag-grip></drag-grip><category-panel></category-panel><task-bar></task-bar>`);
</script>
</body>
</html>
